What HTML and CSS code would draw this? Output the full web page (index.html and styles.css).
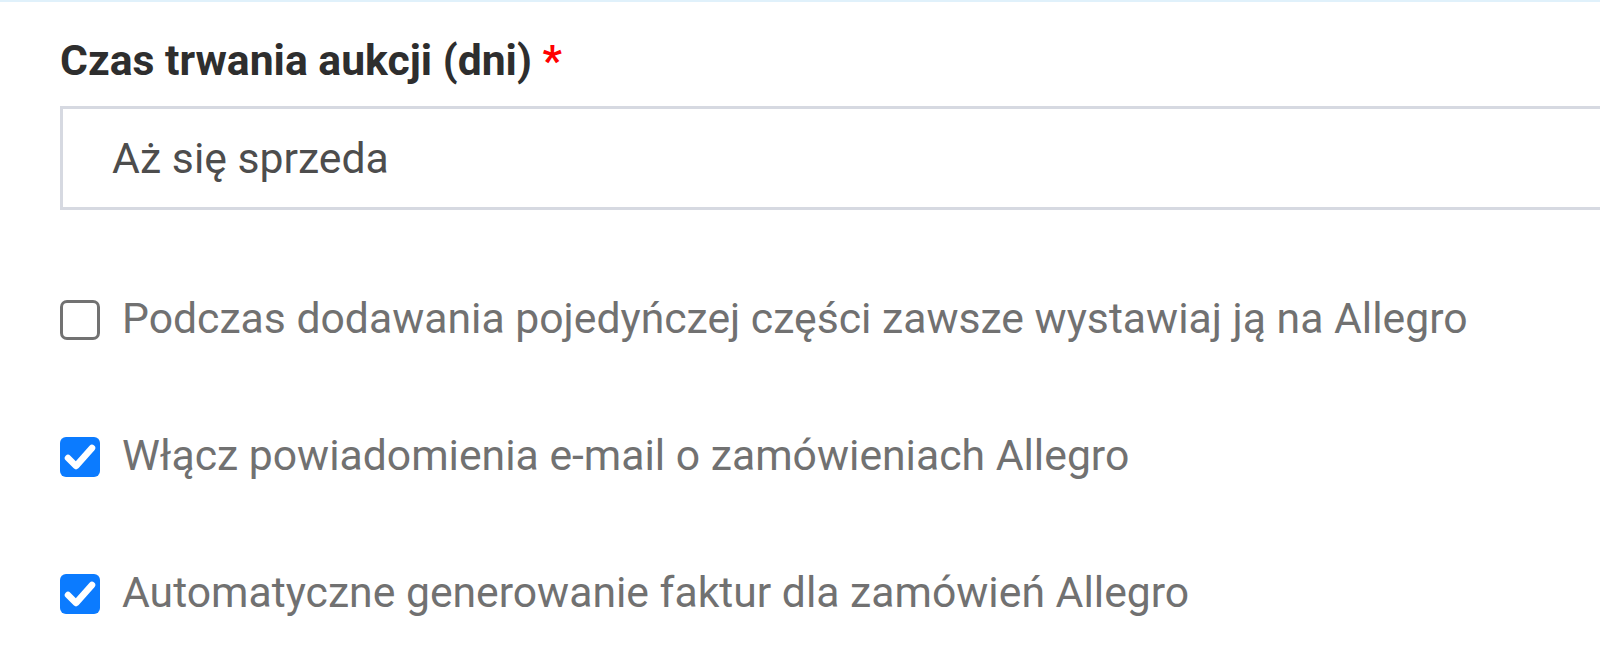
FILE: index.html
```html
<!DOCTYPE html>
<html lang="pl">
<head>
  <meta charset="UTF-8" />
  <meta name="viewport" content="width=device-width, initial-scale=1" />
  <title>Ustawienia Allegro</title>
  <link rel="stylesheet" href="styles.css">
</head>
<body>
  <div class="settings">
    <!-- Czas trwania -->
    <label class="field-label" for="duration">Czas trwania aukcji (dni) <span class="req">*</span></label>
    <div class="select-box" id="duration">Aż się sprzeda</div>

    <!-- Opcje -->
    <div class="check-row">
      <span class="box"></span>
      <span class="check-text">Podczas dodawania pojedyńczej części zawsze wystawiaj ją na Allegro</span>
    </div>

    <div class="check-row">
      <span class="box checked">
        <svg viewBox="0 0 40 40" width="40" height="40"><polyline points="8,21 16,29 32,11" fill="none" stroke="#fff" stroke-width="6.5" stroke-linecap="round" stroke-linejoin="round"/></svg>
      </span>
      <span class="check-text">Włącz powiadomienia e-mail o zamówieniach Allegro</span>
    </div>

    <div class="check-row">
      <span class="box checked">
        <svg viewBox="0 0 40 40" width="40" height="40"><polyline points="8,21 16,29 32,11" fill="none" stroke="#fff" stroke-width="6.5" stroke-linecap="round" stroke-linejoin="round"/></svg>
      </span>
      <span class="check-text">Automatyczne generowanie faktur dla zamówień Allegro</span>
    </div>
  </div>
</body>
</html>
```

FILE: styles.css
```css
html {
  overflow: hidden;
}
body {
  margin: 0;
  padding: 0;
  background-color: #ffffff;
  font-family: Roboto, "Liberation Sans", Arial, sans-serif;
  border-top: 2px solid #e0f1fb;
}
.settings {
  padding: 34px 0 30px 60px;
}
.field-label {
  display: block;
  font-size: 42.7px;
  font-weight: bold;
  color: #2e2e2e;
  line-height: 49px;
  margin-bottom: 21px;
}
.req {
  color: #ff0000;
}
.select-box {
  height: 98px;
  border: 3px solid #d6d9e1;
  border-right: none;
  box-sizing: content-box;
  padding-left: 49px;
  font-size: 42.7px;
  line-height: 98px;
  color: #4d4d4d;
  margin-bottom: 90px;
}
.check-row {
  display: flex;
  align-items: flex-start;
  gap: 22px;
  margin-bottom: 97px;
}
.check-row:last-child {
  margin-bottom: 0;
}
.box {
  width: 40px;
  height: 40px;
  flex: none;
  box-sizing: border-box;
  border: 3px solid #727272;
  border-radius: 7px;
}
.box.checked {
  border: none;
  background-color: #0b7bff;
  border-radius: 6px;
}
.box svg {
  display: block;
}
.check-text {
  font-size: 42.7px;
  line-height: 40px;
  color: #717171;
  margin-top: -2px;
}
```
